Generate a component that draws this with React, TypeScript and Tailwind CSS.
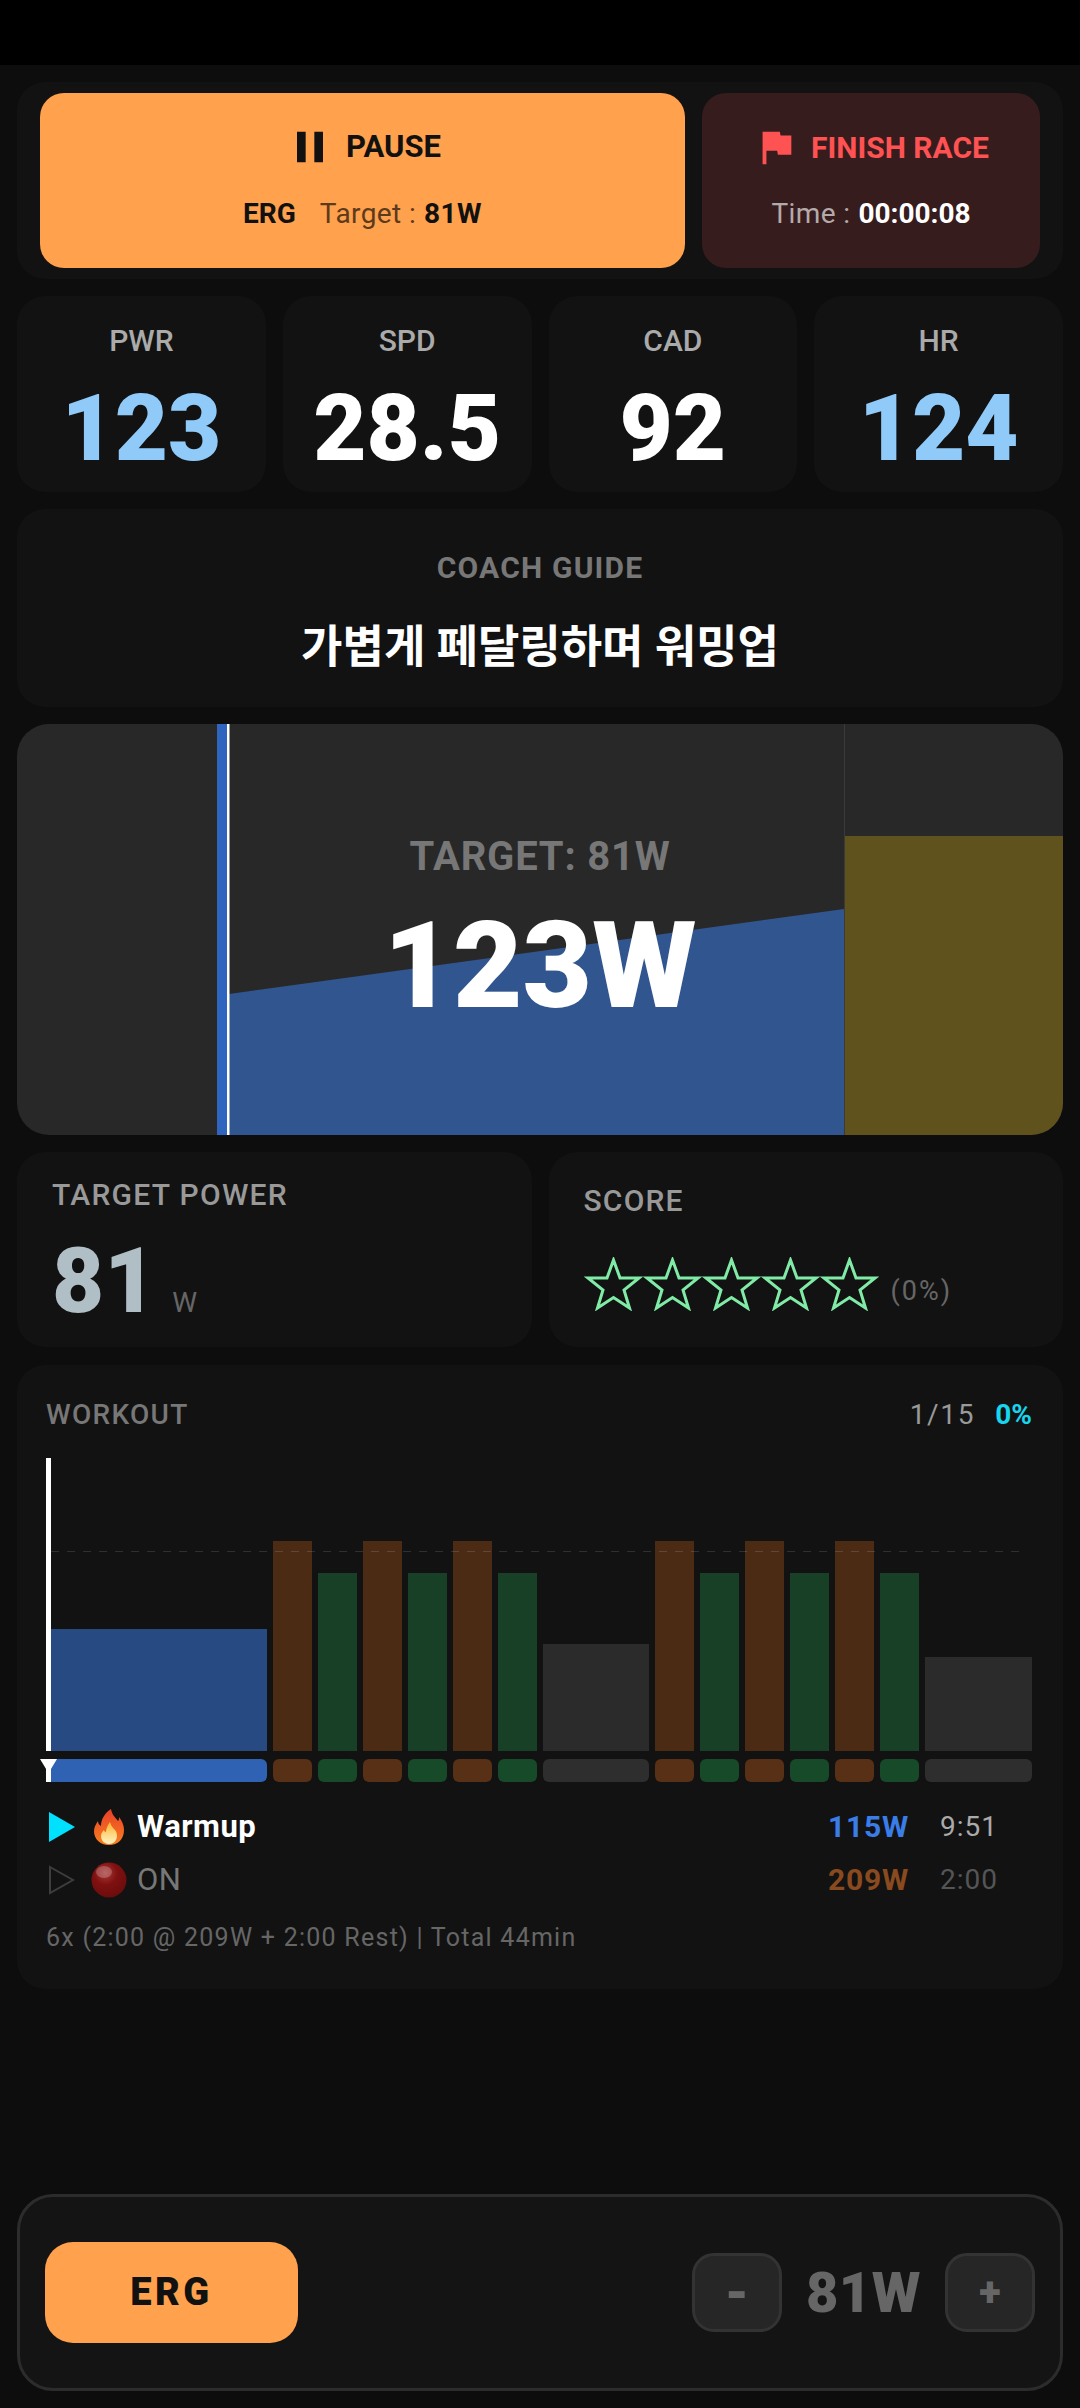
import { MdFlag, MdPause } from 'react-icons/md'

const stats = [
    { label: 'PWR', value: '123', color: 'text-[#90caf9]' },
    { label: 'SPD', value: '28.5', color: 'text-white' },
    { label: 'CAD', value: '92', color: 'text-white' },
    { label: 'HR', value: '124', color: 'text-[#90caf9]' },
]

const BLUE = { bar: 'bg-[#284a82]', strip: 'bg-[#2f62b3]' }
const BROWN = { bar: 'bg-[#4c2b15]', strip: 'bg-[#573015]' }
const GREEN = { bar: 'bg-[#184026]', strip: 'bg-[#174a28]' }
const GRAY = { bar: 'bg-[#2b2b2b]', strip: 'bg-[#2e2e2e]' }

const segments = [
    { width: 221, height: 122, tone: BLUE },
    { width: 39.2, height: 210, tone: BROWN },
    { width: 39.2, height: 178, tone: GREEN },
    { width: 39.2, height: 210, tone: BROWN },
    { width: 39.2, height: 178, tone: GREEN },
    { width: 39.2, height: 210, tone: BROWN },
    { width: 39.2, height: 178, tone: GREEN },
    { width: 107, height: 107, tone: GRAY },
    { width: 39.2, height: 210, tone: BROWN },
    { width: 39.2, height: 178, tone: GREEN },
    { width: 39.2, height: 210, tone: BROWN },
    { width: 39.2, height: 178, tone: GREEN },
    { width: 39.2, height: 210, tone: BROWN },
    { width: 39.2, height: 178, tone: GREEN },
    { width: 107, height: 94, tone: GRAY },
]

function Star() {
    return (
        <svg width="59" height="54" viewBox="0 0 59 54" fill="none">
            <polygon
                points="29.5,3 36,21 55,21 40,33 45.5,51 29.5,40.5 13.5,51 19,33 4,21 23,21"
                stroke="#80eba6"
                strokeWidth="3"
                strokeLinejoin="miter"
            />
        </svg>
    )
}

function Flame() {
    return (
        <svg width="30" height="36" viewBox="0 0 30 36">
            <defs>
                <linearGradient id="flameOuter" x1="0" y1="0" x2="0" y2="1">
                    <stop offset="0" stopColor="#e8402a" />
                    <stop offset="1" stopColor="#f9801d" />
                </linearGradient>
                <linearGradient id="flameInner" x1="0" y1="0" x2="0" y2="1">
                    <stop offset="0" stopColor="#fdb52c" />
                    <stop offset="1" stopColor="#fff3c4" />
                </linearGradient>
            </defs>
            <path d="M17 0c1 6 4 8 7 12 1-1 1-2 1-4 3 4 5 8 5 13 0 9-6 15-15 15S0 30 0 22c0-4 2-7 4-10 0 2 1 4 3 5C7 10 11 4 17 0z" fill="url(#flameOuter)" />
            <path d="M16 13c1 4 3 6 5 8 1 1 2 3 2 6 0 5-4 8-8 8s-8-3-8-8c0-3 2-5 3-6 0 1 1 2 2 2 0-4 2-7 4-10z" fill="url(#flameInner)" />
        </svg>
    )
}

function Ball() {
    return (
        <svg width="36" height="36" viewBox="0 0 36 36">
            <defs>
                <radialGradient id="ballFill" cx="0.4" cy="0.3" r="0.75">
                    <stop offset="0" stopColor="#a83a3a" />
                    <stop offset="0.45" stopColor="#7f1010" />
                    <stop offset="1" stopColor="#6a0c0c" />
                </radialGradient>
            </defs>
            <circle cx="18" cy="18" r="17.5" fill="url(#ballFill)" />
            <ellipse cx="13" cy="10" rx="8" ry="6" fill="#ffffff" opacity="0.22" />
        </svg>
    )
}

function PlayIcon({ active }: { active: boolean }) {
    return (
        <svg width="26" height="30" viewBox="0 0 26 30" className="ml-[3px] shrink-0">
            {active ? (
                <polygon points="0,0 26,15 0,30" fill="#00e0ff" />
            ) : (
                <polygon points="1,2 24,15 1,28" fill="none" stroke="#3d3d3d" strokeWidth="2" />
            )}
        </svg>
    )
}

function SegmentRow({ active, icon, name, watts, time, wattColor, timeColor, nameColor }: {
    active: boolean
    icon: React.ReactNode
    name: string
    watts: string
    time: string
    wattColor: string
    timeColor: string
    nameColor: string
}) {
    return (
        <div className="flex items-center h-10">
            <PlayIcon active={active} />
            <div className="w-[36px] ml-[16px] flex justify-center">{icon}</div>
            <span className={`ml-[10px] text-[31px] leading-10 tracking-[0.5px] ${nameColor}`}>{name}</span>
            <span className={`ml-auto text-[30px] leading-10 font-bold tracking-[0.8px] ${wattColor}`}>{watts}</span>
            <span className={`w-[92px] ml-[31px] text-[28px] leading-10 tracking-[1px] ${timeColor}`}>{time}</span>
        </div>
    )
}

export default function App() {
    return (
        <div className="w-[1080px] h-[2408px] flex flex-col bg-[#0d0d0d] font-['Roboto','Noto_Sans_CJK_KR',sans-serif] overflow-hidden">
            <div className="h-[65px] bg-black shrink-0" />

            <div className="flex-1 flex flex-col gap-[17px] px-[17px] pt-[17px] pb-[17px]">
                {/* Top buttons */}
                <div className="flex gap-[17px] h-[197px] px-[23px] py-[11px] rounded-[28px] bg-[#121212]">
                    <div className="w-[645px] flex flex-col items-center justify-center gap-[31px] rounded-[24px] bg-[#ffa14d]">
                        <div className="flex items-center h-9 gap-[10px]">
                            <MdPause size={52} className="text-[#111]" />
                            <span className="text-[31px] font-bold text-[#111]">PAUSE</span>
                        </div>
                        <div className="flex items-center h-9 text-[28px] text-[#111]">
                            <span className="font-bold">ERG</span>
                            <span className="ml-[24px] tracking-[0.4px] text-[#5c3a1b]">Target : </span>
                            <span className="ml-[8px] font-bold tracking-[0.4px]">81W</span>
                        </div>
                    </div>
                    <div className="flex-1 flex flex-col items-center justify-center gap-[31px] rounded-[24px] bg-[#371c1e]">
                        <div className="flex items-center h-9 gap-[12px]">
                            <MdFlag size={46} className="text-[#ff5252]" />
                            <span className="text-[30px] font-bold text-[#ff5252]">FINISH RACE</span>
                        </div>
                        <div className="flex items-center h-9 text-[28px]">
                            <span className="tracking-[0.4px] text-[#b5aaaa]">Time : </span>
                            <span className="ml-[8px] font-bold text-white">00:00:08</span>
                        </div>
                    </div>
                </div>

                {/* Stats */}
                <div className="grid grid-cols-4 gap-[17px]">
                    {stats.map((s) => (
                        <div key={s.label} className="h-[196px] pt-[27px] flex flex-col items-center rounded-[28px] bg-[#121212]">
                            <span className="text-[30px] leading-9 font-medium text-[#aaaaaa]">{s.label}</span>
                            <span className={`mt-[20px] text-[92px] leading-[100px] font-black ${s.color}`}>{s.value}</span>
                        </div>
                    ))}
                </div>

                {/* Coach guide */}
                <div className="h-[198px] pt-[41px] flex flex-col items-center rounded-[28px] bg-[#121212]">
                    <span className="text-[30px] leading-9 font-bold tracking-[1.2px] text-[#777777]">COACH GUIDE</span>
                    <span className="mt-[34px] text-[45px] leading-[56px] font-bold text-white">가볍게 페달링하며 워밍업</span>
                </div>

                {/* Power graph */}
                <div className="relative h-[411px] rounded-[32px] overflow-hidden bg-[#282828]">
                    <svg className="absolute inset-0" width="1046" height="411" viewBox="0 0 1046 411">
                        <polygon points="212,270 827,185 827,411 212,411" fill="#31558f" />
                        <rect x="200" y="0" width="10" height="411" fill="#2f65bf" />
                        <rect x="210" y="0" width="2.5" height="411" fill="#ffffff" />
                        <rect x="827" y="0" width="1" height="411" fill="#3a3a3a" />
                        <rect x="828" y="112" width="218" height="299" fill="#60521c" />
                    </svg>
                    <div className="relative h-full flex flex-col items-center pt-[108px]">
                        <span className="text-[40px] leading-[50px] font-bold tracking-[0.8px] text-[#777777]">TARGET: 81W</span>
                        <span className="mt-[19px] text-[120px] leading-[130px] font-black text-white">123W</span>
                    </div>
                </div>

                {/* Target power + score */}
                <div className="grid grid-cols-2 gap-[17px]">
                    <div className="h-[195px] pt-[25px] pl-[35px] rounded-[28px] bg-[#121212]">
                        <div className="text-[30px] leading-9 font-medium tracking-[1.3px] text-[#999999]">TARGET POWER</div>
                        <div className="mt-[24px] flex items-baseline gap-[16px]">
                            <span className="text-[90px] leading-[90px] font-black text-[#b0bec5]">81</span>
                            <span className="text-[28px] text-[#666666]">W</span>
                        </div>
                    </div>
                    <div className="h-[195px] pt-[31px] pl-[35px] rounded-[28px] bg-[#121212]">
                        <div className="text-[30px] leading-9 font-medium tracking-[1.2px] text-[#999999]">SCORE</div>
                        <div className="mt-[38px] flex items-end">
                            <Star />
                            <Star />
                            <Star />
                            <Star />
                            <Star />
                            <span className="ml-[12px] mb-[2px] text-[27px] leading-9 tracking-[2px] text-[#666666]">(0%)</span>
                        </div>
                    </div>
                </div>

                {/* Workout */}
                <div className="mt-[1px] h-[624px] pt-[32px] pl-[29px] pr-[31px] rounded-[28px] bg-[#121212]">
                    <div className="flex items-center h-9">
                        <span className="text-[28px] font-medium tracking-[1.3px] text-[#777777]">WORKOUT</span>
                        <span className="ml-auto text-[28px] tracking-[1.7px] text-[#999999]">1/15</span>
                        <span className="ml-[20px] text-[28px] font-bold text-[#18d5ee]">0%</span>
                    </div>

                    <div className="relative mt-[25px]">
                        <div className="flex items-end gap-[5.8px] h-[293px]">
                            {segments.map((s, i) => (
                                <div key={i} className={`min-w-0 ${s.tone.bar}`} style={{ width: s.width, height: s.height }} />
                            ))}
                        </div>
                        <svg className="absolute left-[5px] top-[93px]" width="975" height="1">
                            <line x1="0" y1="0.5" x2="975" y2="0.5" stroke="#ffffff" strokeOpacity="0.13" strokeWidth="1" strokeDasharray="8 8" />
                        </svg>
                        <div className="mt-[8px] flex gap-[5.8px] h-[23px]">
                            {segments.map((s, i) => (
                                <div key={i} className={`min-w-0 rounded-[6px] ${s.tone.strip}`} style={{ width: s.width }} />
                            ))}
                        </div>
                        {/* Playhead */}
                        <div className="absolute left-0 top-0 w-[5px] h-[293px] bg-white" />
                        <div className="absolute left-0 top-[301px] w-[5px] h-[23px] bg-white" />
                        <svg className="absolute left-[-6px] top-[301px]" width="17" height="14" viewBox="0 0 17 14">
                            <polygon points="0,0 17,0 8.5,14" fill="#ffffff" />
                        </svg>
                    </div>

                    <div className="mt-[25px] flex flex-col gap-[13px]">
                        <SegmentRow
                            active
                            icon={<Flame />}
                            name="Warmup"
                            watts="115W"
                            time="9:51"
                            nameColor="text-white font-bold"
                            wattColor="text-[#3a7de8]"
                            timeColor="text-[#aaaaaa]"
                        />
                        <SegmentRow
                            active={false}
                            icon={<Ball />}
                            name="ON"
                            watts="209W"
                            time="2:00"
                            nameColor="text-[#777777]"
                            wattColor="text-[#8a4a1f]"
                            timeColor="text-[#555555]"
                        />
                    </div>

                    <div className="mt-[22px] text-[25px] leading-8 tracking-[1.25px] text-[#666666]">
                        6x (2:00 @ 209W + 2:00 Rest) | Total 44min
                    </div>
                </div>

                {/* ERG control */}
                <div className="mt-auto h-[197px] flex items-center justify-between pl-[25px] pr-[25px] rounded-[36px] border-[3px] border-[#2c2c2c] bg-[#141414]">
                    <div className="w-[253px] h-[101px] flex items-center justify-center rounded-[28px] bg-[#ffa14d]">
                        <span className="text-[38px] font-black tracking-[3.5px] text-[#111]">ERG</span>
                    </div>
                    <div className="flex items-center gap-[24px]">
                        <div className="w-[90px] h-[79px] flex items-center justify-center rounded-[22px] border-[3px] border-[#333333] bg-[#262626] text-[54px] font-black text-[#666666]">-</div>
                        <span className="text-[56px] font-black tracking-[0.5px] text-[#666666]">81W</span>
                        <div className="w-[90px] h-[79px] flex items-center justify-center rounded-[22px] border-[3px] border-[#333333] bg-[#262626] text-[40px] font-black text-[#666666]">+</div>
                    </div>
                </div>
            </div>
        </div>
    )
}
